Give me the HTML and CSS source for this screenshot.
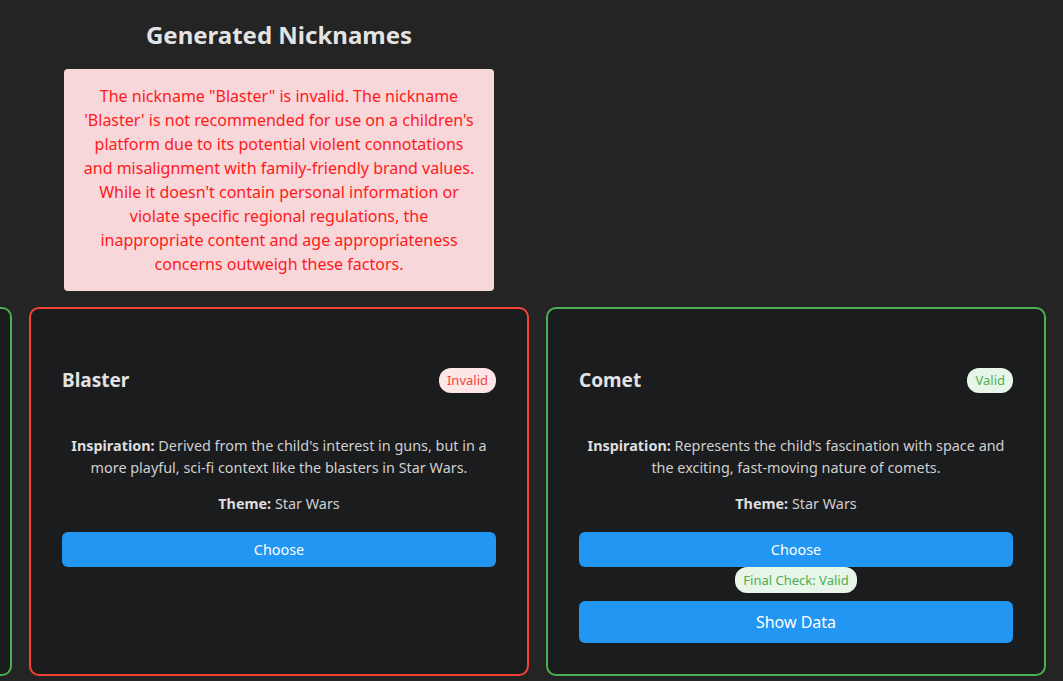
FILE: index.html
```html
<!DOCTYPE html>
<html lang="en">
<head>
<meta charset="utf-8">
<title>Generated Nicknames</title>
<link rel="stylesheet" href="styles.css">
</head>
<body>
<main class="page">
  <section class="top">
    <h2 class="title">Generated Nicknames</h2>
    <div class="alert">The nickname "Blaster" is invalid. The nickname 'Blaster' is not recommended for use on a children's platform due to its potential violent connotations and misalignment with family-friendly brand values. While it doesn't contain personal information or violate specific regional regulations, the inappropriate content and age appropriateness concerns outweigh these factors.</div>
  </section>
  <section class="cards">
    <article class="card valid">
      <div class="card-head"><h3 class="name">Trooper</h3><span class="badge ok">Valid</span></div>
      <p class="desc"><b>Inspiration:</b> A friendly nod to the child's love of Star Wars characters.</p>
      <p class="theme"><b>Theme:</b> Star Wars</p>
      <button class="btn">Choose</button>
    </article>
    <article class="card invalid">
      <div class="card-head"><h3 class="name">Blaster</h3><span class="badge bad">Invalid</span></div>
      <p class="desc"><b>Inspiration:</b> Derived from the child's interest in guns, but in a more playful, sci-fi context like the blasters in Star Wars.</p>
      <p class="theme"><b>Theme:</b> Star Wars</p>
      <button class="btn">Choose</button>
    </article>
    <article class="card valid">
      <div class="card-head"><h3 class="name">Comet</h3><span class="badge ok">Valid</span></div>
      <p class="desc"><b>Inspiration:</b> Represents the child's fascination with space and the exciting, fast-moving nature of comets.</p>
      <p class="theme"><b>Theme:</b> Star Wars</p>
      <button class="btn">Choose</button>
      <div class="final-wrap"><span class="badge ok final">Final Check: Valid</span></div>
      <button class="btn big">Show Data</button>
    </article>
  </section>
</main>
</body>
</html>
```

FILE: styles.css
```css
html, body {
  margin: 0;
  padding: 0;
  background: #242424;
  overflow: hidden;
  height: 681px;
}
body {
  font-family: "Noto Sans", "Open Sans", sans-serif;
  color: #d6d6d6;
}
.page {
  display: flex;
  flex-direction: column;
}
.top {
  width: 500px;
  margin-left: 29px;
  display: flex;
  flex-direction: column;
  align-items: center;
}
.title {
  margin: 18px 0 0;
  font-size: 24px;
  line-height: 33px;
  font-weight: 700;
  color: #e3e3e3;
}
.alert {
  margin-top: 18px;
  width: 400px;
  padding: 15px;
  background: #f8d7da;
  color: #ff1a1a;
  border-radius: 4px;
  font-size: 16px;
  line-height: 24px;
  text-align: center;
}
.cards {
  display: flex;
  gap: 17px;
  margin-top: 16px;
  margin-left: -488px;
  align-items: stretch;
}
.card {
  flex: 0 0 500px;
  box-sizing: border-box;
  width: 500px;
  background: #1b1c1e;
  border: 2px solid #4caf50;
  border-radius: 10px;
  padding: 31px;
  display: flex;
  flex-direction: column;
}
.card.invalid { border-color: #f44336; }
.card-head {
  margin-top: 27px;
  display: flex;
  justify-content: space-between;
  align-items: center;
  height: 26px;
}
.name {
  margin: 0;
  font-size: 19px;
  font-weight: 700;
  color: #e3e3e3;
}
.badge {
  display: inline-block;
  font-size: 13px;
  line-height: 17px;
  padding: 4px 8px;
  border-radius: 12px;
}
.badge.bad { background: #ffe6e6; color: #f44336; }
.badge.ok { background: #e8f5e9; color: #4caf50; }
.desc {
  margin: 42px 0 0;
  font-size: 14.4px;
  line-height: 22px;
  text-align: center;
  color: #cfcfcf;
}
.theme {
  margin: 14px 0 0;
  font-size: 14.4px;
  line-height: 22px;
  text-align: center;
  color: #cfcfcf;
}
b { color: #dedede; font-weight: 700; }
.btn {
  margin-top: 17px;
  height: 35px;
  border: none;
  border-radius: 6px;
  background: #2196f3;
  color: #ffffff;
  font-family: "Noto Sans", "Open Sans", sans-serif;
  font-size: 14.4px;
}
.final-wrap {
  display: flex;
  justify-content: center;
}
.final { padding: 4px 8px; line-height: 18px; }
.btn.big {
  margin-top: 8px;
  height: 42px;
  font-size: 16px;
}
```
